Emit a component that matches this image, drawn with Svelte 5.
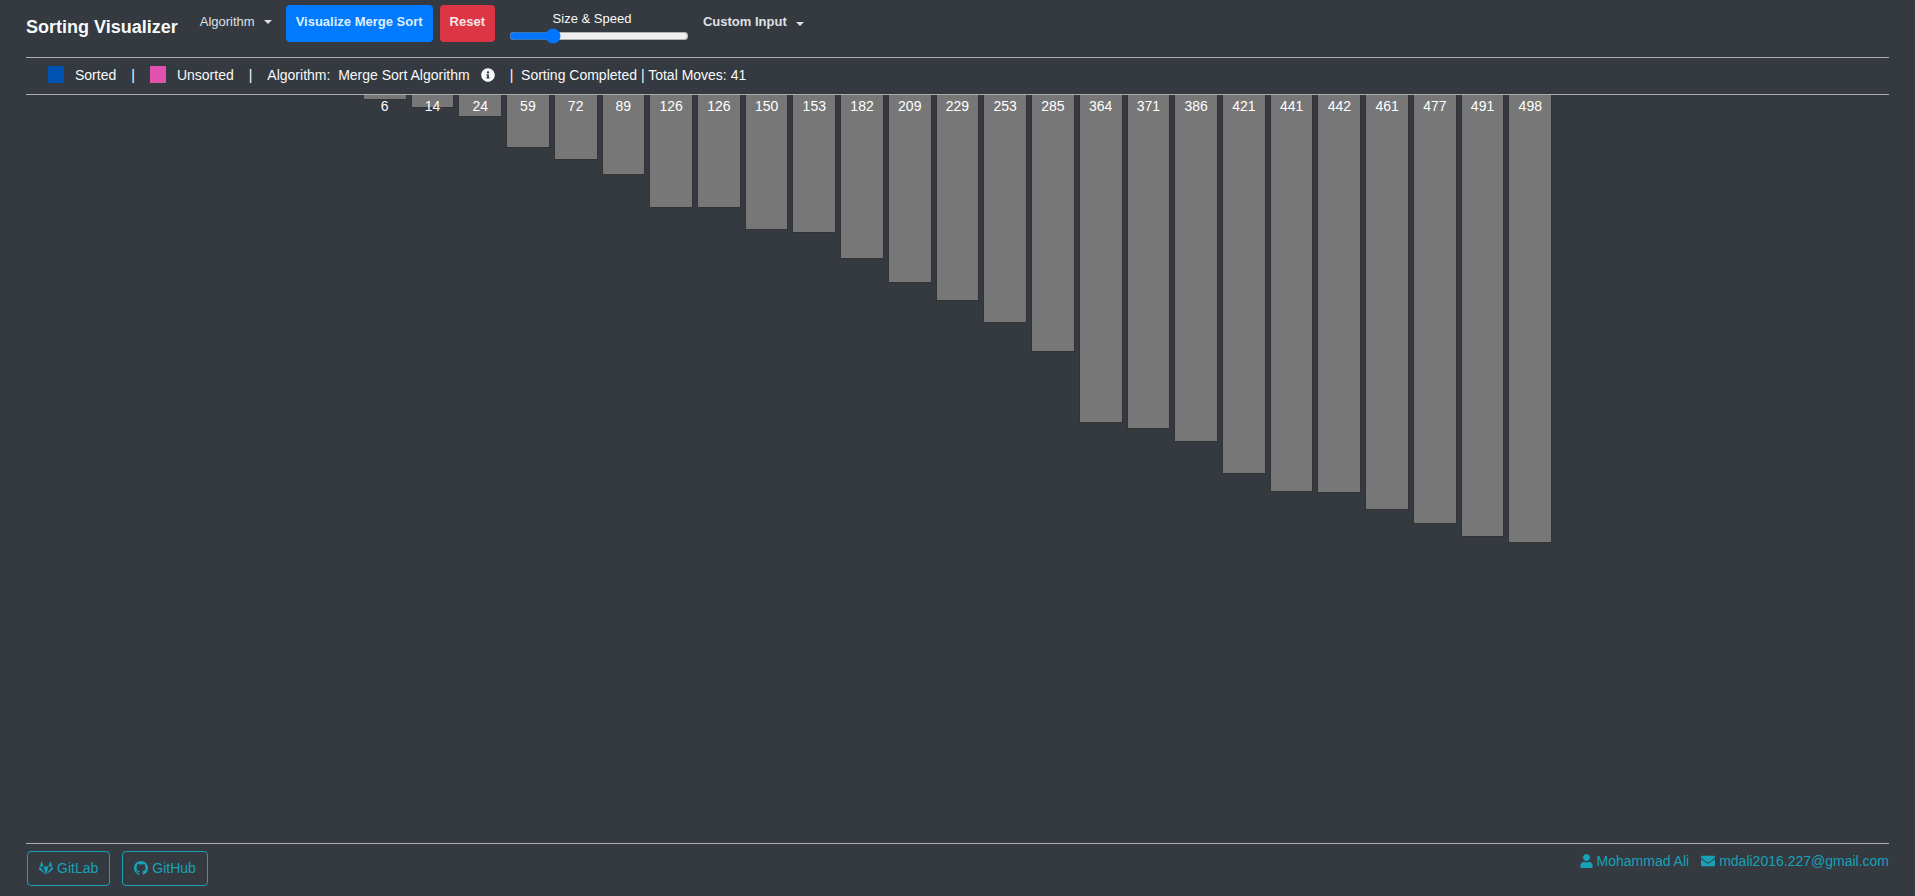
<script lang="ts">
	let values = $state([
		6, 14, 24, 59, 72, 89, 126, 126, 150, 153, 182, 209, 229, 253, 285, 364, 371, 386, 421, 441, 442, 461, 477,
		491, 498
	]);
	let algorithm = $state('Merge Sort');
	let moves = $state(41);
	let size = $state(22);
</script>

<div class="page">
	<header>
		<h1>Sorting Visualizer</h1>
		<nav>
			<button class="menu algorithm">Algorithm <span class="caret"></span></button>
			<button class="btn primary">Visualize {algorithm}</button>
			<button class="btn danger">Reset</button>
			<div class="range">
				<label for="size">Size &amp; Speed</label>
				<input id="size" type="range" min="0" max="100" bind:value={size} />
			</div>
			<button class="menu custom">Custom Input <span class="caret low"></span></button>
		</nav>
	</header>

	<section class="info">
		<span class="swatch sorted"></span>
		<span>Sorted</span>
		<span class="sep">|</span>
		<span class="swatch unsorted"></span>
		<span>Unsorted</span>
		<span class="sep">|</span>
		<span>Algorithm:&nbsp; {algorithm} Algorithm</span>
		<svg class="about" viewBox="0 0 512 512" aria-hidden="true">
			<path d="M256 8C119.043 8 8 119.083 8 256c0 136.997 111.043 248 248 248s248-111.003 248-248C504 119.083 392.957 8 256 8zm0 110c23.196 0 42 18.804 42 42s-18.804 42-42 42-42-18.804-42-42 18.804-42 42-42zm56 254c0 6.627-5.373 12-12 12h-88c-6.627 0-12-5.373-12-12v-24c0-6.627 5.373-12 12-12h12v-64h-12c-6.627 0-12-5.373-12-12v-24c0-6.627 5.373-12 12-12h64c6.627 0 12 5.373 12 12v100h12c6.627 0 12 5.373 12 12v24z" />
		</svg>
		<span>|&nbsp; Sorting Completed | Total Moves: {moves}</span>
	</section>

	<main>
		<div class="bars">
			{#each values as v}
				<div class="bar" style="height: {v * 0.9}px">{v}</div>
			{/each}
		</div>
	</main>

	<footer>
		<div class="repos">
			<a class="outline" href="#gitlab">
				<svg viewBox="0 0 512 512" aria-hidden="true">
					<path d="M105.2 24.9c-3.1-8.9-15.7-8.9-18.9 0L29.8 199.7h132c-.1 0-56.6-174.8-56.6-174.8zM.9 287.7c-2.6 8 .3 16.9 7.1 22l247.9 184-226.9-294zm160.8-88l94.3 294 94.3-294zm349.4 88l-28.8-88-226.3 294 247.9-184c6.9-5.1 9.7-14 7.2-22zM425.7 24.9c-3.1-8.9-15.7-8.9-18.9 0l-56.6 174.8h132z" />
				</svg>
				GitLab
			</a>
			<a class="outline" href="#github">
				<svg viewBox="0 0 16 16" aria-hidden="true">
					<path d="M8 0C3.58 0 0 3.58 0 8c0 3.54 2.29 6.53 5.47 7.59.4.07.55-.17.55-.38 0-.19-.01-.82-.01-1.49-2.01.37-2.53-.49-2.69-.94-.09-.23-.48-.94-.82-1.13-.28-.15-.68-.52-.01-.53.63-.01 1.08.58 1.23.82.72 1.21 1.87.87 2.33.66.07-.52.28-.87.51-1.07-1.78-.2-3.64-.89-3.64-3.95 0-.87.31-1.59.82-2.15-.08-.2-.36-1.02.08-2.12 0 0 .67-.21 2.2.82.64-.18 1.32-.27 2-.27s1.36.09 2 .27c1.53-1.04 2.2-.82 2.2-.82.44 1.1.16 1.92.08 2.12.51.56.82 1.27.82 2.15 0 3.07-1.87 3.75-3.65 3.95.29.25.54.73.54 1.48 0 1.07-.01 1.93-.01 2.2 0 .21.15.46.55.38A8.01 8.01 0 0 0 16 8c0-4.42-3.58-8-8-8z" />
				</svg>
				GitHub
			</a>
		</div>
		<div class="contact">
			<a href="#author">
				<svg class="user" viewBox="0 0 448 512" aria-hidden="true">
					<path d="M224 256c70.7 0 128-57.3 128-128S294.7 0 224 0 96 57.3 96 128s57.3 128 128 128zm89.6 32h-16.7c-22.2 10.2-46.9 16-72.9 16s-50.6-5.8-72.9-16h-16.7C60.2 288 0 348.2 0 422.4V464c0 26.5 21.5 48 48 48h352c26.5 0 48-21.5 48-48v-41.6c0-74.2-60.2-134.4-134.4-134.4z" />
				</svg>
				Mohammad Ali
			</a>
			<a href="mailto:mdali2016.227@gmail.com">
				<svg viewBox="0 0 512 512" aria-hidden="true">
					<path d="M502.3 190.8c3.9-3.1 9.7-.2 9.7 4.7V400c0 26.5-21.5 48-48 48H48c-26.5 0-48-21.5-48-48V195.600c0-5 5.700-7.800 9.700-4.700 22.400 17.400 52.100 39.500 154.100 113.600 21.100 15.400 56.700 47.800 92.200 47.600 35.700.3 72-32.800 92.300-47.600 102-74.100 131.600-96.300 154-113.700zM256 320c23.200.4 56.600-29.200 73.400-41.400 132.700-96.300 142.800-104.700 173.400-128.700 5.800-4.500 9.200-11.500 9.200-18.900v-19c0-26.500-21.500-48-48-48H48c-26.500 0-48 21.500-48 48v19c0 7.400 3.400 14.300 9.200 18.900 30.600 23.900 40.700 32.400 173.400 128.700 16.800 12.200 50.200 41.800 73.400 41.400z" />
				</svg>
				mdali2016.227@gmail.com
			</a>
		</div>
	</footer>
</div>

<style>
	:global(body) {
		background: #343a40;
	}
	.page {
		display: flex;
		flex-direction: column;
		min-height: 100vh;
		box-sizing: border-box;
		padding: 0 26px;
		background: #343a40;
		color: #f8f9fa;
		font: 14px/20px 'Liberation Sans', Arial, sans-serif;
	}
	header {
		display: flex;
		align-items: flex-start;
		gap: 22px;
		min-height: 52px;
		padding-top: 5px;
		border-bottom: 1px solid #adadad;
	}
	h1 {
		margin: 10px 0 0;
		font-size: 18px;
		line-height: 24px;
	}
	nav {
		display: flex;
		align-items: flex-start;
	}
	button {
		border: 0;
		font: 700 13px/20px 'Liberation Sans', Arial, sans-serif;
		cursor: pointer;
	}
	.menu {
		display: flex;
		align-items: center;
		gap: 9px;
		padding: 7px 0 0;
		background: none;
		color: #dfe0e2;
	}
	.algorithm {
		margin-right: 14px;
		font-weight: 400;
	}
	.caret {
		border: 4px solid transparent;
		border-top-color: currentColor;
		border-bottom: 0;
	}
	.low {
		margin-top: 4px;
	}
	.btn {
		margin-right: 7px;
		padding: 7px 10px 10px;
		border-radius: 4px;
	}
	.primary {
		background: #007bff;
		color: #dfeeff;
	}
	.danger {
		background: #dc3545;
		color: #fae5e7;
	}
	.range {
		display: flex;
		flex-direction: column;
		margin: 4px 14px 0 7px;
		font-size: 13px;
	}
	.range label {
		padding-right: 14px;
		text-align: center;
	}
	.range input {
		width: 180px;
		height: 14px;
		margin: 0;
	}
	.info {
		display: flex;
		align-items: center;
		height: 34px;
		padding: 0 0 2px 22px;
		border-bottom: 1px solid #adadad;
	}
	.swatch {
		width: 16px;
		height: 17px;
		margin-right: 11px;
		margin-bottom: 2px;
	}
	.sorted {
		background: #0052b0;
	}
	.unsorted {
		background: #e052ad;
	}
	.sep {
		margin: 0 15px;
	}
	.about {
		margin: 0 15px 0 11px;
	}
	svg {
		width: 14px;
		height: 14px;
		fill: currentColor;
	}
	.user {
		width: 13px;
	}
	main {
		flex: 1;
	}
	.bars {
		display: grid;
		grid-auto-flow: column;
		grid-auto-columns: 1fr;
		align-items: start;
		gap: 4px;
		width: calc(62vw + 2px);
		margin: 0 auto;
	}
	.bar {
		box-sizing: border-box;
		border: 1px solid #333;
		border-top: 0;
		background: #777;
		color: #fff;
		line-height: 22px;
		text-align: center;
	}
	footer {
		display: flex;
		justify-content: space-between;
		align-items: flex-start;
		min-height: 52px;
		border-top: 1px solid #adadad;
	}
	.repos {
		display: flex;
		gap: 12px;
		padding: 7px 1px 0;
	}
	.contact {
		display: flex;
		gap: 12px;
		padding-top: 7px;
	}
	a {
		display: flex;
		align-items: center;
		gap: 4px;
		color: #17a2b8;
		text-decoration: none;
	}
	.outline {
		padding: 6px 11px 7px;
		border: 1px solid #17a2b8;
		border-radius: 4px;
	}
</style>
